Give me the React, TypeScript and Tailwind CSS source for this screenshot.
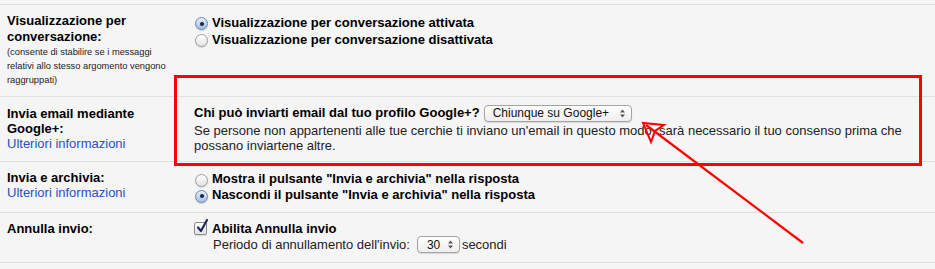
import React from "react";

const FONT = { fontFamily: '"Liberation Sans", Arial, Helvetica, sans-serif' };

function Radio({ checked }: { checked?: boolean }) {
  return checked ? (
    <span className="relative inline-flex h-[13px] w-[13px] shrink-0 translate-y-[1px] items-center justify-center rounded-full border border-[#6d86a8] bg-linear-to-b from-[#e4eefa] to-[#9dc1ea] shadow-[0_1px_1px_rgba(0,0,0,0.15)]">
      <span className="h-[4px] w-[4px] rounded-full bg-[#1b2536]" />
    </span>
  ) : (
    <span className="inline-block h-[13px] w-[13px] shrink-0 translate-y-[1px] rounded-full border border-[#9b9b9b] bg-linear-to-b from-[#ffffff] to-[#e3e3e3] shadow-[0_1px_1px_rgba(0,0,0,0.12)]" />
  );
}

function Checkbox() {
  return (
    <span className="relative inline-block h-[13px] w-[13px] shrink-0 rounded-[2px] border border-[#8d8d8d] bg-linear-to-b from-[#ffffff] to-[#e2e2e2] shadow-[0_1px_1px_rgba(0,0,0,0.12)]">
      <svg
        className="absolute left-[1px] top-[-4px]"
        width="13"
        height="15"
        viewBox="0 0 13 15"
      >
        <path
          d="M2 8.5 L5 12 L11 1"
          fill="none"
          stroke="#1c2b5e"
          strokeWidth="2.2"
          strokeLinecap="round"
          strokeLinejoin="round"
        />
      </svg>
    </span>
  );
}

function SelectArrows() {
  return (
    <svg width="5" height="9" viewBox="0 0 5 9" className="shrink-0">
      <path d="M0 3.5 L2.5 0.5 L5 3.5 Z" fill="#555" />
      <path d="M0 5.5 L2.5 8.5 L5 5.5 Z" fill="#555" />
    </svg>
  );
}

function Select({
  label,
  width,
  pl,
}: {
  label: string;
  width: string;
  pl: string;
}) {
  return (
    <span
      className={`inline-flex h-[17px] items-center justify-between rounded-[4px] border border-[#a3a3a3] bg-linear-to-b from-[#ffffff] to-[#eeeeee] pr-[6px] text-[12px] leading-none text-[#111] shadow-[0_1px_1px_rgba(0,0,0,0.12)] ${width} ${pl}`}
    >
      <span>{label}</span>
      <SelectArrows />
    </span>
  );
}

export default function App() {
  return (
    <div
      className="relative h-[269px] w-[935px] overflow-hidden bg-[#f5f5f5] pt-[4px] text-[13px] text-[#222]"
      style={FONT}
    >
      {/* Row 1 */}
      <div className="flex h-[92px] border-t border-[#e1e1e1]">
        <div className="w-[194px] shrink-0 pl-[7px] pr-[19px] pt-[8px]">
          <div className="font-bold leading-[16px] text-black">
            Visualizzazione per conversazione:
          </div>
          <div className="text-[9.3px] leading-[14px] text-[#222]">
            (consente di stabilire se i messaggi relativi allo stesso
            argomento vengono raggruppati)
          </div>
        </div>
        <div className="pt-[9px] font-bold text-black">
          <div className="flex h-[17px] items-center gap-[4px] pl-[1px]">
            <Radio checked />
            <span>Visualizzazione per conversazione attivata</span>
          </div>
          <div className="flex h-[17px] items-center gap-[4px] pl-[1px]">
            <Radio />
            <span>Visualizzazione per conversazione disattivata</span>
          </div>
        </div>
      </div>

      {/* Row 2 */}
      <div className="flex h-[65px] border-t border-[#e1e1e1]">
        <div className="w-[194px] shrink-0 pl-[7px] pr-[19px] pt-[9px] leading-[15px]">
          <div className="font-bold text-black">
            Invia email mediante Google+:
          </div>
          <div className="text-[#2a4fc4]">Ulteriori informazioni</div>
        </div>
        <div className="pt-[8px]">
          <div className="flex h-[16px] items-center gap-[4px]">
            <span className="font-bold text-black">
              Chi può inviarti email dal tuo profilo Google+?
            </span>
            <Select label="Chiunque su Google+" width="w-[148px]" pl="pl-[8px]" />
          </div>
          <div className="mt-[2px] w-[720px] leading-[15px]">
            Se persone non appartenenti alle tue cerchie ti inviano un'email in
            questo modo, sarà necessario il tuo consenso prima che possano
            inviartene altre.
          </div>
        </div>
      </div>

      {/* Row 3 */}
      <div className="flex h-[51px] border-t border-[#e1e1e1]">
        <div className="w-[194px] shrink-0 pl-[7px] pr-[19px] pt-[8px] leading-[15px]">
          <div className="font-bold text-black">Invia e archivia:</div>
          <div className="text-[#2a4fc4]">Ulteriori informazioni</div>
        </div>
        <div className="pt-[9px] font-bold text-black">
          <div className="flex h-[16px] items-center gap-[4px] pl-[1px]">
            <Radio />
            <span>Mostra il pulsante "Invia e archivia" nella risposta</span>
          </div>
          <div className="flex h-[16px] items-center gap-[4px] pl-[1px]">
            <Radio checked />
            <span>Nascondi il pulsante "Invia e archivia" nella risposta</span>
          </div>
        </div>
      </div>

      {/* Row 4 */}
      <div className="flex h-[51px] border-y border-[#e1e1e1]">
        <div className="w-[194px] shrink-0 pl-[7px] pr-[19px] pt-[8px] leading-[15px]">
          <div className="font-bold text-black">Annulla invio:</div>
        </div>
        <div className="pt-[8px]">
          <div className="flex h-[15px] items-center gap-[5px]">
            <Checkbox />
            <span className="font-bold text-black">Abilita Annulla invio</span>
          </div>
          <div className="flex h-[17px] items-center pl-[19px]">
            <span>Periodo di annullamento dell'invio:</span>
            <span className="ml-[7px] mr-[2px] flex">
              <Select label="30" width="w-[43px]" pl="pl-[9px]" />
            </span>
            <span>secondi</span>
          </div>
        </div>
      </div>

      {/* Red highlight box */}
      <div className="pointer-events-none absolute left-[174px] top-[75px] h-[91px] w-[748px] border-[3px] border-[#ff0000]" />

      {/* Red arrow */}
      <svg
        className="pointer-events-none absolute left-0 top-0"
        width="935"
        height="269"
        viewBox="0 0 935 269"
      >
        <line
          x1="803"
          y1="243"
          x2="646"
          y2="125"
          stroke="#ff0000"
          strokeWidth="2.2"
        />
        <path
          d="M664 125 L643 123 L651 142 L655 131 Z"
          fill="none"
          stroke="#ff0000"
          strokeWidth="2"
          strokeLinejoin="miter"
        />
      </svg>
    </div>
  );
}
